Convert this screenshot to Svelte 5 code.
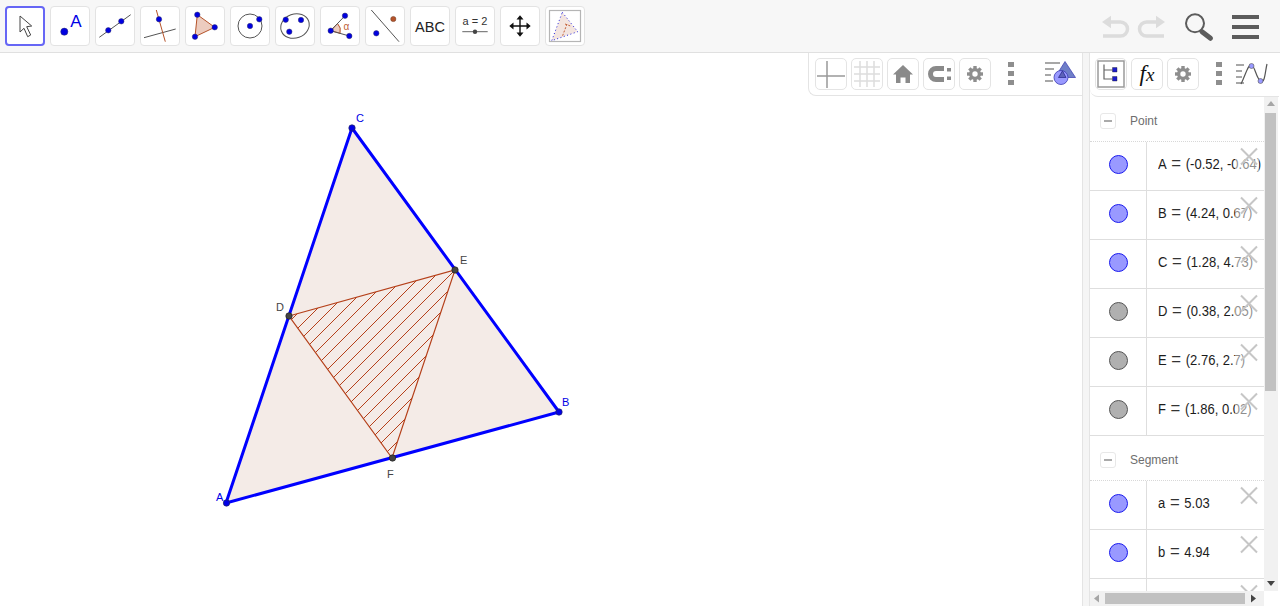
<script>
  const points = [
    { name: 'A', value: '(-0.52, -0.64)', free: true },
    { name: 'B', value: '(4.24, 0.67)', free: true },
    { name: 'C', value: '(1.28, 4.73)', free: true },
    { name: 'D', value: '(0.38, 2.05)', free: false },
    { name: 'E', value: '(2.76, 2.7)', free: false },
    { name: 'F', value: '(1.86, 0.02)', free: false },
  ];
  // third segment is scrolled almost out of view, only its delete cross shows
  const segments = [
    { name: 'a', value: '5.03', free: true },
    { name: 'b', value: '4.94', free: true },
    { name: '', value: '', free: true },
  ];

  // hatching of triangle DEF, lines x + y = const
  const hatch = [];
  for (let k = -3; k < 24; k++) {
    const c = Math.round(625.6 + 14.2 * k);
    hatch.push({ x1: 250, y1: c - 250, x2: 500, y2: c - 500 });
  }
</script>

{#snippet blue(x, y, r = 2.7)}
  <circle cx={x} cy={y} {r} fill="#0000e0" stroke="#33336b" stroke-width="0.5" />
{/snippet}

{#snippet gear()}
  <g transform="translate(15 15)">
    {#each [0, 45, 90, 135] as a}
      <rect x="-1.7" y="-8" width="3.4" height="16" fill="#8e8e8e" transform="rotate({a})" />
    {/each}
    <circle r="6" fill="#8e8e8e" />
    <circle r="2.7" fill="#fff" />
  </g>
{/snippet}

{#snippet dots()}
  <div class="dots"><i></i><i></i><i></i></div>
{/snippet}

{#snippet row(item)}
  <div class="row">
    <div class="marble-cell">
      <span class="marble" class:free={item.free}></span>
    </div>
    {#if item.name}
      <div class="formula">{item.name}<span class="eq">=</span>{item.value}</div>
    {/if}
    <svg class="del" width="24" height="32" viewBox="0 0 24 32">
      <path d="M6 6.500 22 22.500M22 6.500 6 22.500" stroke="#c6c6c6" stroke-width="2" />
    </svg>
  </div>
{/snippet}

{#snippet group(title, items)}
  <div class="group-head">
    <span class="collapse"><i></i></span>
    <span class="group-title">{title}</span>
  </div>
  {#each items as item}
    {@render row(item)}
  {/each}
{/snippet}

<div class="app">
  <header class="toolbar">
    <div class="tools">
      <button class="tool selected" type="button" aria-label="Move">
        <svg viewBox="0 0 40 40"><path d="M15 10V26L19 22.3 22.7 30.7 25.7 29 21.7 20.7 26.700 20Z" fill="#fff" stroke="#444" stroke-width="1" /></svg>
      </button>
      <button class="tool" type="button" aria-label="Point">
        <svg viewBox="0 0 40 40">
          <circle cx="14.300" cy="25.700" r="3.600" fill="#0000e0" stroke="#33336b" stroke-width=".5" />
          <text x="26" y="21" class="t-a">A</text>
        </svg>
      </button>
      <button class="tool" type="button" aria-label="Line">
        <svg viewBox="0 0 40 40">
          <path d="M4.300 31.300 35.700 8.700" stroke="#555" />
          {@render blue(13.3, 24.3)}{@render blue(26.3, 15.3)}
        </svg>
      </button>
      <button class="tool" type="button" aria-label="Perpendicular line">
        <svg viewBox="0 0 40 40">
          <path d="M4 31.700 35.700 23" stroke="#555" />
          <path d="M16.300 4 25.300 35.700" stroke="#b5532a" />
          {@render blue(19, 13.3)}
        </svg>
      </button>
      <button class="tool" type="button" aria-label="Polygon">
        <svg viewBox="0 0 40 40">
          <path d="M12.300 8.700 29.700 21.300 10 30.700Z" fill="#ecccbf" stroke="#b5532a" />
          {@render blue(12.3, 8.7)}{@render blue(29.7, 21.3)}{@render blue(10, 30.7)}
        </svg>
      </button>
      <button class="tool" type="button" aria-label="Circle">
        <svg viewBox="0 0 40 40">
          <circle cx="20" cy="20" r="12" fill="none" stroke="#555" />
          {@render blue(20, 20)}{@render blue(29.3, 13.3)}
        </svg>
      </button>
      <button class="tool" type="button" aria-label="Conic">
        <svg viewBox="0 0 40 40">
          <ellipse cx="20" cy="20" rx="14.500" ry="12" fill="none" stroke="#555" transform="rotate(-20 20 20)" />
          {@render blue(10.7, 13.7)}{@render blue(14.3, 25.7)}{@render blue(26, 14)}
        </svg>
      </button>
      <button class="tool" type="button" aria-label="Angle">
        <svg viewBox="0 0 40 40">
          <path d="M10.700 24.700 17.500 17.500A10 10 0 0 1 20 27.300Z" fill="#ecccbf" stroke="#b5532a" />
          <path d="M25 9.700 10.700 24.700 29.300 30" fill="none" stroke="#555" />
          {@render blue(25, 9.7)}{@render blue(10.7, 24.7)}{@render blue(29.3, 30)}
          <text x="26.300" y="23.500" class="t-alpha">α</text>
        </svg>
      </button>
      <button class="tool" type="button" aria-label="Reflect">
        <svg viewBox="0 0 40 40">
          <path d="M6.300 4 34 35.700" stroke="#555" />
          <circle cx="28.300" cy="13" r="2.600" fill="#b5532a" stroke="#6b3a22" stroke-width=".5" />
          {@render blue(11.3, 27.3)}
        </svg>
      </button>
      <button class="tool" type="button" aria-label="Text">
        <svg viewBox="0 0 40 40"><text x="20" y="25.500" class="t-abc">ABC</text></svg>
      </button>
      <button class="tool" type="button" aria-label="Slider">
        <svg viewBox="0 0 40 40">
          <text x="20" y="18.500" class="t-slider">a = 2</text>
          <path d="M7.300 25.700H32.700" stroke="#666" />
          <circle cx="20" cy="25.700" r="2.200" fill="#444" />
        </svg>
      </button>
      <button class="tool" type="button" aria-label="Move graphics view">
        <svg viewBox="0 0 40 40">
          <path d="M20 12V28M12 20H28" stroke="#111" stroke-width="1.400" />
          <path d="M20 9.300 23.500 13.500H16.500ZM20 30.700 23.500 26.500H16.500ZM9.300 20 13.500 16.500V23.500ZM30.700 20 26.500 16.500V23.500Z" fill="#111" />
        </svg>
      </button>
      <button class="tool" type="button" aria-label="Custom tool">
        <svg viewBox="0 0 40 40">
          <rect x="4.500" y="4.500" width="31" height="31" fill="#fff" stroke="#b5b5b5" stroke-width="1.200" />
          <path d="M17.300 6.300 32.700 25.700 6.700 34.700Z" fill="#f3e5e0" stroke="#2222dd" stroke-dasharray="1 2.500" />
          <path d="M20 18 25.500 20M22 18 17.500 30" fill="none" stroke="#c4603a" stroke-dasharray="2 1.500" />
        </svg>
      </button>
    </div>
    <div class="actions">
      <svg class="undo" width="32" height="26" viewBox="0 0 32 26" aria-label="Undo">
        <path d="M2 8 11 1.700V14.300Z" fill="#dcdcdc" />
        <path d="M10 8H20.500A7 7 0 0 1 20.500 22H3" fill="none" stroke="#dcdcdc" stroke-width="3.500" />
      </svg>
      <svg class="redo" width="32" height="26" viewBox="0 0 32 26" aria-label="Redo">
        <path d="M30 8 21 1.700V14.300Z" fill="#dcdcdc" />
        <path d="M22 8H11.500A7 7 0 0 0 11.500 22H29" fill="none" stroke="#dcdcdc" stroke-width="3.500" />
      </svg>
      <svg class="search" width="32" height="32" viewBox="0 0 32 32" aria-label="Search">
        <circle cx="12" cy="11.300" r="9" fill="none" stroke="#5c5c5c" stroke-width="2" />
        <path d="M19 19.700 27.500 26.300" stroke="#5c5c5c" stroke-width="5" stroke-linecap="round" />
      </svg>
      <div class="burger"><i></i><i></i><i></i></div>
    </div>
  </header>

  <div class="main">
    <section class="graphics">
      <svg class="canvas" width="1082" height="555" viewBox="0 53 1082 555">
        <defs>
          <clipPath id="inner"><path d="M289 316 455 270 392 458Z" /></clipPath>
        </defs>
        <path d="M226 503 559 412 352 128Z" fill="#f4ebe7" />
        <g clip-path="url(#inner)" stroke="#b5401a" stroke-width="1" shape-rendering="crispEdges">
          {#each hatch as h}
            <line x1={h.x1} y1={h.y1} x2={h.x2} y2={h.y2} />
          {/each}
        </g>
        <path d="M289 316 455 270 392 458Z" fill="none" stroke="#b5401a" stroke-width="1.200" />
        <path d="M226 503 559 412 352 128Z" fill="none" stroke="#0000ff" stroke-width="3" stroke-linejoin="round" />
        <g fill="#0000e6" stroke="#222266" stroke-width="0.7">
          <circle cx="226.500" cy="503" r="3.200" />
          <circle cx="559" cy="412" r="3.200" />
          <circle cx="352" cy="128" r="3.200" />
        </g>
        <g fill="#444" stroke="#222" stroke-width="0.7">
          <circle cx="289" cy="316" r="3.200" />
          <circle cx="455" cy="270" r="3.200" />
          <circle cx="392.500" cy="458" r="3.200" />
        </g>
        <g class="labels blue-labels">
          <text x="216" y="501">A</text>
          <text x="562" y="406">B</text>
          <text x="356" y="122">C</text>
        </g>
        <g class="labels">
          <text x="276" y="311">D</text>
          <text x="460" y="264">E</text>
          <text x="387" y="478">F</text>
        </g>
      </svg>

      <div class="graphics-bar">
        <div class="style-btn">
          <svg width="30" height="30" viewBox="0 0 30 30"><path d="M1 17H29M11 2V29" stroke="#999" stroke-width="1.500" fill="none" /></svg>
        </div>
        <div class="style-btn">
          <svg width="30" height="30" viewBox="0 0 30 30"><path d="M2 8H28M2 15H28M2 22H28M8 2V28M15 2V28M22 2V28" stroke="#ddd" stroke-width="1.500" fill="none" /></svg>
        </div>
        <div class="style-btn">
          <svg width="30" height="30" viewBox="0 0 30 30"><path d="M15 6 25 15.500H22V24H17.500V18.500H12.500V24H8V15.500H5Z" fill="#8a8a8a" /></svg>
        </div>
        <div class="style-btn">
          <svg width="30" height="30" viewBox="0 0 30 30">
            <path d="M20 9.500H12A5.500 5.500 0 0 0 12 20.500H20" fill="none" stroke="#8a8a8a" stroke-width="5" />
            <path d="M23 9H27V12.500H23ZM23 17.500H27V21H23Z" fill="#8a8a8a" />
          </svg>
        </div>
        <div class="style-btn">
          <svg width="30" height="30" viewBox="0 0 30 30">{@render gear()}</svg>
        </div>
        {@render dots()}
        <svg class="bar-end" width="32" height="32" viewBox="0 0 32 32">
          <path d="M1 5H16M1 11H10M1 17H7M1 23H9" stroke="#8a8a8a" stroke-width="1.600" />
          <path d="M21 3.500 31.500 19.500H11Z" fill="#6f7fc8" stroke="#3a3ab0" stroke-width=".7" />
          <circle cx="17" cy="19.500" r="7" fill="#9999ff" stroke="#3a3ab0" stroke-width=".8" />
          <path d="M18.500 12.800 22 19.500H14.500Z" fill="#5c62b8" stroke="#22228a" stroke-width=".7" />
        </svg>
      </div>
    </section>

    <div class="divider"></div>

    <aside class="algebra">
      <div class="algebra-bar">
        <div class="style-btn">
          <svg width="30" height="30" viewBox="0 0 30 30">
            <rect x="2" y="2" width="26" height="26" fill="none" stroke="#9a9a9a" stroke-width="1.500" />
            <path d="M8 5.500V20H16.500M8 11H16.500" fill="none" stroke="#666" stroke-width="1.200" />
            <path d="M16.500 8.500H21V13H16.500ZM16.500 17.500H21V22H16.500Z" fill="#1c1ccc" stroke="#222" stroke-width=".4" />
          </svg>
        </div>
        <div class="style-btn fx"><span><em>f</em>x</span></div>
        <div class="style-btn">
          <svg width="30" height="30" viewBox="0 0 30 30">{@render gear()}</svg>
        </div>
        {@render dots()}
        <svg class="bar-end alg-end" width="32" height="32" viewBox="0 0 32 32">
          <path d="M0 7H8M0 13H6M0 19H6M0 25H8" stroke="#8a8a8a" stroke-width="1.600" />
          <path d="M5 26C10 16 12 6 15.500 7S20 20 24.500 23 29 14 31 6" fill="none" stroke="#555" stroke-width="1.200" />
          <circle cx="15.500" cy="8" r="2.500" fill="#9999ff" stroke="#555" stroke-width=".6" />
          <circle cx="24.500" cy="23" r="2.500" fill="#9999ff" stroke="#555" stroke-width=".6" />
        </svg>
      </div>
      <div class="scroller">
        <div class="viewport">
          {@render group('Point', points)}
          {@render group('Segment', segments)}
        </div>
        <div class="vbar">
          <svg width="14" height="16" viewBox="0 0 14 16"><path d="M7 4 11 9H3Z" fill="#a6a6a6" /></svg>
          <div class="vthumb"></div>
          <svg class="arrow-end" width="14" height="16" viewBox="0 0 14 16"><path d="M7 11 11 6H3Z" fill="#444" /></svg>
        </div>
        <div class="hbar">
          <svg width="15" height="15" viewBox="0 0 15 15"><path d="M4 7.500 9 3.500V11.500Z" fill="#a6a6a6" /></svg>
          <div class="hthumb"></div>
          <svg class="arrow-end" width="15" height="15" viewBox="0 0 15 15"><path d="M11 7.500 6 3.500V11.500Z" fill="#444" /></svg>
        </div>
      </div>
    </aside>
  </div>
</div>

<style>
  :global(body) {
    margin: 0;
    background: #fff;
  }

  .app {
    display: flex;
    flex-direction: column;
    width: 1280px;
    height: 608px;
    overflow: hidden;
    font-family: 'Liberation Sans', Arial, sans-serif;
  }

  .toolbar {
    display: flex;
    justify-content: space-between;
    flex: none;
    box-sizing: border-box;
    height: 53px;
    padding: 6px 0 0 5px;
    background: #f7f7f7;
    border-bottom: 1px solid #e0e0e0;
  }

  .tools {
    display: flex;
    gap: 5px;
  }

  .tool {
    width: 40px;
    height: 40px;
    padding: 0;
    background: #fff;
    border: 1px solid #e3e3e3;
    border-radius: 4px;
    box-sizing: border-box;
  }

  .tool svg {
    display: block;
    width: 40px;
    height: 40px;
    margin: -1px;
  }

  .tool.selected {
    border: 2px solid #6666f5;
  }

  .tool.selected svg {
    margin: -2px;
  }

  .t-a {
    font-size: 17px;
    fill: #0000e6;
    text-anchor: middle;
  }

  .t-alpha {
    font-size: 10px;
    fill: #c0603a;
    text-anchor: middle;
  }

  .t-abc {
    font-size: 14.5px;
    fill: #222;
    text-anchor: middle;
  }

  .t-slider {
    font-size: 11px;
    fill: #333;
    text-anchor: middle;
  }

  .actions {
    display: flex;
    align-items: flex-start;
    margin-top: 8px;
    margin-right: 21px;
  }

  .redo {
    margin-left: 2.6px;
  }

  .search {
    margin-left: 16.4px;
    margin-top: -2px;
  }

  .burger {
    display: flex;
    flex-direction: column;
    gap: 6px;
    width: 27px;
    margin-left: 17px;
    margin-top: 1px;
  }

  .burger i {
    display: block;
    height: 4px;
    background: #5c5c5c;
  }

  .main {
    display: flex;
    flex: 1;
    min-height: 0;
  }

  .graphics {
    position: relative;
    width: 1082px;
    flex: none;
    background: #fff;
  }

  .canvas {
    display: block;
  }

  .labels text {
    font-size: 11px;
    fill: #444;
  }

  .blue-labels text {
    fill: #0000e6;
  }

  .graphics-bar {
    position: absolute;
    top: 0;
    right: 0;
    display: flex;
    align-items: flex-start;
    box-sizing: border-box;
    width: 274px;
    height: 43px;
    padding: 5px 0 0 6px;
    gap: 4px;
    background: #fff;
    border-left: 1px solid #e4e4e4;
    border-bottom: 1px solid #e4e4e4;
    border-bottom-left-radius: 8px;
  }

  .style-btn {
    display: flex;
    align-items: center;
    justify-content: center;
    flex: none;
    width: 32px;
    height: 32px;
    box-sizing: border-box;
    border: 1px solid #e4e4e4;
    border-radius: 5px;
    background: #fff;
  }

  .style-btn svg {
    flex: none;
  }

  .dots {
    display: flex;
    flex-direction: column;
    gap: 4px;
    flex: none;
    width: 6px;
    margin: 4px 0 0 13px;
  }

  .dots i {
    display: block;
    height: 5px;
    background: #8e8e8e;
  }

  .bar-end {
    flex: none;
    margin-left: 26px;
  }

  .divider {
    flex: none;
    width: 7px;
    margin-bottom: 2px;
    background: #f5f5f5;
    border-left: 1px solid #e4e4e4;
    box-sizing: border-box;
  }

  .algebra {
    display: flex;
    flex-direction: column;
    flex: none;
    width: 190px;
    margin-right: 1px;
    margin-bottom: 2px;
    box-sizing: border-box;
    border-left: 1px solid #e4e4e4;
  }

  .algebra-bar {
    display: flex;
    align-items: flex-start;
    flex: none;
    height: 44px;
    box-sizing: border-box;
    padding: 5px 0 0 5px;
    gap: 4px;
    border-bottom: 1px solid #e4e4e4;
    border-bottom-left-radius: 8px;
  }

  .alg-end {
    margin-left: 10px;
  }

  .fx span {
    font-family: 'Liberation Serif', serif;
    font-size: 19px;
    font-style: italic;
    color: #111;
  }

  .fx em {
    font-size: 23px;
  }

  .scroller {
    display: grid;
    grid-template-columns: 174px 14px;
    grid-template-rows: 494px 15px;
    flex: 1;
    min-height: 0;
  }

  .viewport {
    overflow: hidden;
    background: #fff;
  }

  .group-head {
    display: flex;
    align-items: center;
    height: 45px;
    box-sizing: border-box;
    padding: 0 0 0 10px;
    border-bottom: 1px dotted #d8d8d8;
  }

  .collapse {
    display: flex;
    align-items: center;
    justify-content: center;
    width: 16px;
    height: 16px;
    box-sizing: border-box;
    border: 1px solid #e8e8e8;
    border-radius: 3px;
    margin-top: 4px;
  }

  .collapse i {
    display: block;
    width: 8px;
    height: 1.5px;
    background: #aaa;
  }

  .group-title {
    margin-left: 14px;
    margin-top: 3px;
    font-size: 12px;
    color: #6e6e6e;
  }

  .row {
    position: relative;
    display: flex;
    align-items: center;
    height: 49px;
    box-sizing: border-box;
    border-bottom: 1px solid #dedede;
    white-space: nowrap;
    overflow: hidden;
  }

  .marble-cell {
    display: flex;
    align-items: center;
    justify-content: center;
    flex: none;
    width: 57px;
    height: 100%;
    padding-bottom: 4px;
    border-right: 1px solid #dedede;
    box-sizing: border-box;
  }

  .marble {
    width: 19px;
    height: 19px;
    border-radius: 50%;
    box-sizing: border-box;
    background: #b0b0b0;
    border: 1px solid #555;
  }

  .marble.free {
    background: #9999ff;
    border-color: #1a1aee;
  }

  .formula {
    margin-left: 11px;
    margin-bottom: 4px;
    font-size: 14px;
    color: #1c1c1c;
    transform: scaleX(0.93);
    transform-origin: left center;
  }

  .eq {
    margin: 0 5px;
    font-size: 18px;
    line-height: 0;
    color: #333;
  }

  .del {
    position: absolute;
    top: 0;
    left: 145px;
    background: rgba(255, 255, 255, 0.5);
  }

  .vbar {
    display: flex;
    flex-direction: column;
    background: #f1f1f1;
  }

  .vthumb {
    width: 11px;
    height: 278px;
    margin-left: 1px;
    background: #c1c1c1;
  }

  .arrow-end {
    margin-top: auto;
  }

  .hbar {
    display: flex;
    align-items: center;
    background: #f1f1f1;
  }

  .hthumb {
    width: 140px;
    height: 11px;
    background: #c1c1c1;
  }
</style>
